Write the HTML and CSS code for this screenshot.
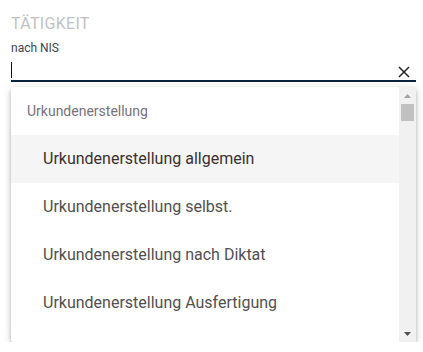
FILE: index.html
```html
<!DOCTYPE html>
<html lang="de">
<head>
<meta charset="utf-8">
<title>Tätigkeit</title>
<link rel="stylesheet" href="styles.css">
</head>
<body>
<div class="field">
  <div class="label">TÄTIGKEIT</div>
  <div class="sub">nach NIS</div>
  <div class="input-row">
    <span class="caret"></span>
    <svg class="clear" width="12" height="12" viewBox="0 0 12 12"><path d="M1 1L11 11M11 1L1 11" stroke="#222" stroke-width="1.5" fill="none"/></svg>
  </div>
  <div class="dropdown">
    <div class="list">
      <div class="group">Urkundenerstellung</div>
      <div class="item active">Urkundenerstellung allgemein</div>
      <div class="item">Urkundenerstellung selbst.</div>
      <div class="item">Urkundenerstellung nach Diktat</div>
      <div class="item">Urkundenerstellung Ausfertigung</div>
    </div>
    <div class="scrollbar">
      <div class="sb-btn"><svg width="7" height="4" viewBox="0 0 7 4"><polygon points="3.5,0 7,4 0,4" fill="#a3a3a3"/></svg></div>
      <div class="sb-thumb"></div>
      <div class="sb-space"></div>
      <div class="sb-btn"><svg width="7" height="4" viewBox="0 0 7 4"><polygon points="0,0 7,0 3.5,4" fill="#505050"/></svg></div>
    </div>
  </div>
</div>
</body>
</html>
```

FILE: styles.css
```css
html, body {
  margin: 0;
  padding: 0;
  background: #fff;
}
body {
  font-family: Roboto, "Liberation Sans", sans-serif;
}
.field {
  padding: 14px 7px 0 11px;
}
.label {
  font-size: 16px;
  line-height: 20px;
  color: #c2c2c2;
  letter-spacing: 0.3px;
}
.sub {
  margin-top: 7px;
  font-size: 12px;
  line-height: 14px;
  color: #3a4656;
}
.input-row {
  display: flex;
  justify-content: space-between;
  align-items: center;
  padding: 7px 6px 2px 0;
  border-bottom: 2px solid #0c2340;
}
.caret {
  display: block;
  width: 1px;
  height: 16px;
  background: #111;
}
.clear {
  display: block;
  margin-top: 4px;
}
.dropdown {
  margin-top: 5px;
  height: 255px;
  display: flex;
  background: #fff;
  border-radius: 2px;
  box-shadow: 0 2px 4px -1px rgba(0,0,0,.2), 0 4px 5px 0 rgba(0,0,0,.14), 0 1px 10px 0 rgba(0,0,0,.12);
  overflow: hidden;
}
.list {
  flex: 1;
  overflow: hidden;
}
.group {
  height: 48px;
  line-height: 48px;
  padding-left: 16px;
  font-size: 14px;
  color: #77727e;
}
.item {
  height: 48px;
  line-height: 48px;
  padding-left: 32px;
  font-size: 16px;
  color: #505050;
  white-space: nowrap;
}
.item.active {
  background: #f5f5f5;
  color: #3a3030;
}
.scrollbar {
  width: 17px;
  background: #f1f1f1;
  display: flex;
  flex-direction: column;
}
.sb-btn {
  height: 17px;
  display: flex;
  align-items: center;
  justify-content: center;
}
.sb-btn svg {
  display: block;
}
.sb-thumb {
  height: 17px;
  margin: 0 2px;
  background: #c1c1c1;
}
.sb-space {
  flex: 1;
}
```
